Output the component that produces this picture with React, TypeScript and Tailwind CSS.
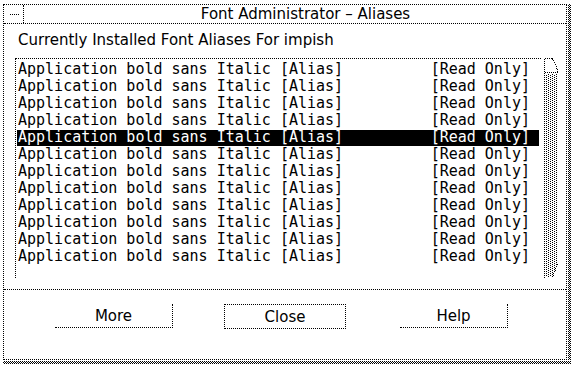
import React from "react";

const rows = Array.from({ length: 12 }, () => ({
  name: "Application bold sans Italic [Alias]",
  status: "[Read Only]",
}));

const SELECTED = 4;

function ScrollBar() {
  return (
    <svg width="14" height="220" viewBox="0 0 14 220" shapeRendering="crispEdges" className="block">
      <defs>
        <pattern id="stip" width="4" height="2" patternUnits="userSpaceOnUse">
          <rect x="0" y="0" width="1" height="1" fill="#000" />
          <rect x="2" y="1" width="1" height="1" fill="#000" />
        </pattern>
      </defs>
      {/* up arrow */}
      <path
        d="M0.5 0.5 H8.5 L13.5 11.5 V14.5 M0.5 14.5 H13.5"
        fill="none"
        stroke="#000"
        strokeDasharray="1 1"
      />
      {/* trough */}
      <polygon points="1,16 14,16 14,206 9,219 1,219" fill="url(#stip)" />
      <path d="M13.5 206 L8.5 219.5" fill="none" stroke="#000" strokeDasharray="1 1" />
      <path d="M0.5 0.5 V219.5" fill="none" stroke="#000" strokeDasharray="1 1" />
    </svg>
  );
}

export default function App() {
  return (
    <div className="flex h-[365px] w-[572px] flex-col overflow-hidden bg-white pl-[3px] pr-[1px] pt-[4px] pb-[1px] font-['DejaVu_Sans',sans-serif] text-[15px] text-black">
      <div className="flex flex-1">
        {/* window */}
        <div className="flex flex-1 flex-col border border-dotted border-black">
          {/* title bar */}
          <div className="flex h-[19px] shrink-0 border-b border-dotted border-black">
            <div className="flex w-[20px] items-center justify-center border-r border-dotted border-black">
              <div className="ml-[1px] w-[9px] border-t border-dotted border-black" />
            </div>
            <div className="flex flex-1 justify-center pl-[21px] leading-[18px]">
              Font Administrator – Aliases
            </div>
          </div>

          {/* body */}
          <div className="pl-[11px]">
            <div className="mt-[8px] h-[17px] pl-[3px] leading-[17px]">
              Currently Installed Font Aliases For impish
            </div>
            <div className="mt-[9px] flex">
              <div className="h-[220px] w-[526px] border-l border-t border-dotted border-black pl-[1px] pt-[3px] font-['DejaVu_Sans_Mono',monospace]">
                {rows.map((r, i) => (
                  <div
                    key={i}
                    className={
                      "mb-[1px] flex h-[16px] w-[522px] justify-between whitespace-pre pl-[1px] pr-[9px] leading-[14px] " +
                      (i === SELECTED ? "bg-black text-white" : "")
                    }
                  >
                    <span>{r.name}</span>
                    <span>{r.status}</span>
                  </div>
                ))}
              </div>
              <div className="ml-[3px]">
                <ScrollBar />
              </div>
            </div>
          </div>

          {/* separator */}
          <div className="mt-[11px] border-t border-dotted border-black" />

          {/* buttons */}
          <div className="mt-[14px] flex">
            <button className="ml-[51px] h-[24px] w-[118px] border-b border-r border-dotted border-black pt-[1px] leading-[22px]">
              More
            </button>
            <button className="ml-[51px] h-[25px] w-[122px] border border-dotted border-black leading-[22px]">
              Close
            </button>
            <button className="ml-[54px] h-[24px] w-[108px] border-b border-r border-dotted border-black pt-[1px] leading-[22px]">
              Help
            </button>
          </div>
        </div>

        {/* right stipple edge */}
        <div className="ml-[1px] w-[3px] bg-[image:repeating-conic-gradient(#000_0_25%,#fff_0_50%)] bg-[length:2px_2px]" />
      </div>
      {/* bottom stipple edge */}
      <div className="mt-[1px] h-[3px] shrink-0 bg-[image:repeating-conic-gradient(#000_0_25%,#fff_0_50%)] bg-[length:2px_2px]" />
    </div>
  );
}
